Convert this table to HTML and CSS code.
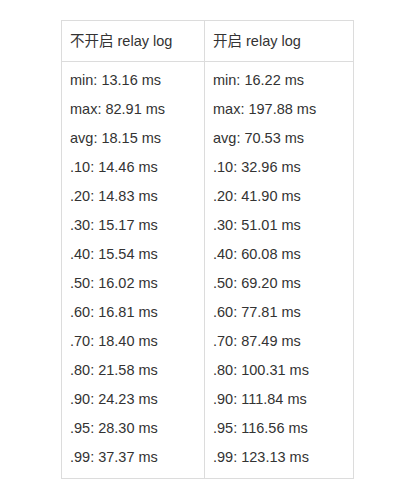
FILE: index.html
```html
<!DOCTYPE html>
<html>
<head>
<meta charset="utf-8">
<link rel="stylesheet" href="styles.css">
</head>
<body>
<table class="cmp">
  <thead>
    <tr><th class="c1">不开启 relay log</th><th class="c2">开启 relay log</th></tr>
  </thead>
  <tbody>
    <tr>
      <td>
        <div class="line">min: 13.16 ms</div>
        <div class="line">max: 82.91 ms</div>
        <div class="line">avg: 18.15 ms</div>
        <div class="line">.10: 14.46 ms</div>
        <div class="line">.20: 14.83 ms</div>
        <div class="line">.30: 15.17 ms</div>
        <div class="line">.40: 15.54 ms</div>
        <div class="line">.50: 16.02 ms</div>
        <div class="line">.60: 16.81 ms</div>
        <div class="line">.70: 18.40 ms</div>
        <div class="line">.80: 21.58 ms</div>
        <div class="line">.90: 24.23 ms</div>
        <div class="line">.95: 28.30 ms</div>
        <div class="line">.99: 37.37 ms</div>
      </td>
      <td>
        <div class="line">min: 16.22 ms</div>
        <div class="line">max: 197.88 ms</div>
        <div class="line">avg: 70.53 ms</div>
        <div class="line">.10: 32.96 ms</div>
        <div class="line">.20: 41.90 ms</div>
        <div class="line">.30: 51.01 ms</div>
        <div class="line">.40: 60.08 ms</div>
        <div class="line">.50: 69.20 ms</div>
        <div class="line">.60: 77.81 ms</div>
        <div class="line">.70: 87.49 ms</div>
        <div class="line">.80: 100.31 ms</div>
        <div class="line">.90: 111.84 ms</div>
        <div class="line">.95: 116.56 ms</div>
        <div class="line">.99: 123.13 ms</div>
      </td>
    </tr>
  </tbody>
</table>
</body>
</html>
```
FILE: styles.css
```css
html, body {
  margin: 0;
  padding: 0;
  background: #fff;
}
body {
  padding: 20px 0 0 61px;
  font-family: "Liberation Sans", Arial, "Noto Sans CJK SC", sans-serif;
  font-size: 14.5px;
  color: #333;
}
.cmp {
  border-collapse: collapse;
  table-layout: fixed;
  width: 293px;
}
.cmp th, .cmp td {
  border: 1px solid #dcdcdc;
  padding: 0 0 0 8px;
  text-align: left;
  font-weight: normal;
  vertical-align: top;
}
.cmp th {
  height: 36px;
  padding-bottom: 4px;
  vertical-align: middle;
}
.c1 { width: 134px; }
.cmp td {
  padding-top: 4px;
  padding-bottom: 6px;
}
.line {
  height: 29px;
  line-height: 29px;
  white-space: nowrap;
}
```
